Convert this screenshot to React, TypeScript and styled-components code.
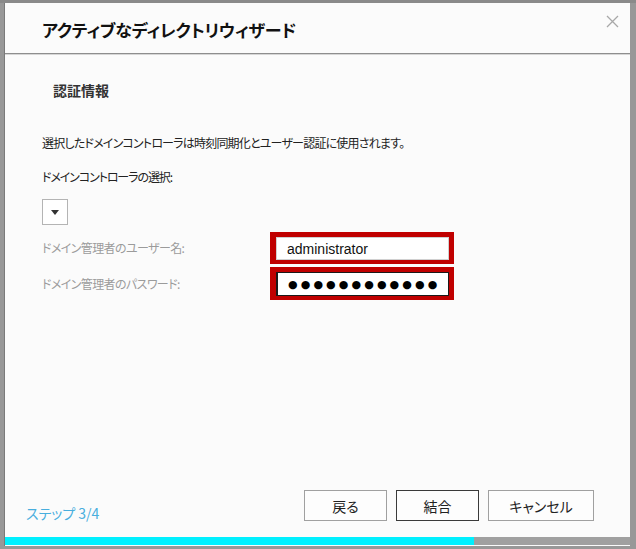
import React from "react";
import styled, { createGlobalStyle } from "styled-components";

const Global = createGlobalStyle`
  html, body { margin: 0; padding: 0; }
  body {
    background: #979797;
    font-family: "Noto Sans CJK JP", "Noto Sans", sans-serif;
    font-feature-settings: "palt";
  }
`;

const Backdrop = styled.div`
  width: 636px;
  height: 549px;
  box-sizing: border-box;
  padding: 3px 6px 3px 5px;
  background:
    linear-gradient(#8a8a8a, #8a8a8a) 0 0 / 100% 3px no-repeat,
    #989898;
`;

const Dialog = styled.div`
  width: 625px;
  height: 543px;
  background: #fbfbfb;
  display: flex;
  flex-direction: column;
  box-shadow: -1px 0 0 #7a7a7a;
`;

const Header = styled.div`
  height: 50px;
  flex: none;
  display: flex;
  justify-content: space-between;
  align-items: flex-start;
  padding: 0 10px 0 37px;
  border-bottom: 1px solid #8e8e8e;
  box-shadow: 0 1px 0 #d6d6d6;
`;

const Title = styled.h1`
  margin: 17px 0 0;
  font-size: 17px;
  font-weight: bold;
  color: #111;
  letter-spacing: -0.2px;
  line-height: 20px;
`;

const Close = styled.button`
  margin-top: 10px;
  border: none;
  background: none;
  padding: 0;
  width: 16px;
  height: 16px;
  display: flex;
  align-items: center;
  justify-content: center;
  cursor: pointer;
`;

const Body = styled.div`
  flex: 1;
  padding: 0 0 0 37px;
  display: flex;
  flex-direction: column;
`;

const Section = styled.h2`
  margin: 26px 0 0 11px;
  font-size: 14px;
  font-weight: bold;
  color: #333;
  line-height: 20px;
`;

const Text = styled.p<{ $top: number; $ls: number }>`
  margin: ${(p) => p.$top}px 0 0;
  font-size: 12px;
  color: #222;
  line-height: 18px;
  letter-spacing: ${(p) => p.$ls}px;
`;

const Select = styled.div`
  margin-top: 13px;
  width: 24px;
  height: 24px;
  border: 1px solid #b4b4b4;
  background: #fff;
  display: flex;
  align-items: center;
  justify-content: center;
`;

const Arrow = styled.span`
  width: 0;
  height: 0;
  border-left: 4px solid transparent;
  border-right: 4px solid transparent;
  border-top: 5px solid #333;
`;

const FieldRow = styled.div<{ $top: number }>`
  margin-top: ${(p) => p.$top}px;
  display: grid;
  grid-template-columns: 228px 184px;
  align-items: center;
`;

const Label = styled.span`
  font-size: 12px;
  color: #9b9b9b;
  line-height: 18px;
  letter-spacing: -0.6px;
`;

const Highlight = styled.div<{ $h: number }>`
  height: ${(p) => p.$h}px;
  box-sizing: border-box;
  background: #c00000;
  padding: 5px 5px 4px 6px;
  display: flex;
`;

const Field = styled.div<{ $focused?: boolean }>`
  flex: 1;
  background: #fff;
  box-sizing: border-box;
  border: 1px solid ${(p) => (p.$focused ? "#1a1a1a" : "#d0d0d0")};
  border-left-width: ${(p) => (p.$focused ? 2 : 1)}px;
  display: flex;
  align-items: center;
  padding-left: 10px;
  font-family: "Liberation Sans", Arial, sans-serif;
  font-size: 14px;
  color: #111;
`;

const Dots = styled.span`
  font-family: "DejaVu Sans", sans-serif;
  font-size: 11px;
  letter-spacing: 3.1px;
  color: #000;
`;

const Footer = styled.div`
  flex: none;
  display: flex;
  align-items: flex-end;
  justify-content: space-between;
  padding: 0 36px 16px 21px;
`;

const Step = styled.span`
  font-size: 14px;
  color: #48aede;
  line-height: 20px;
  margin-bottom: -2px;
`;

const Buttons = styled.div`
  display: flex;
  gap: 9px;
`;

const Button = styled.button<{ $w: number; $primary?: boolean }>`
  width: ${(p) => p.$w}px;
  height: 31px;
  background: #fdfdfd;
  border: 1px solid ${(p) => (p.$primary ? "#3a3a3a" : "#a0a0a0")};
  font-family: "Noto Sans CJK JP", sans-serif;
  font-feature-settings: "palt";
  font-size: 14px;
  color: #222;
  padding: 0;
`;

const Progress = styled.div`
  flex: none;
  height: 8px;
  margin-bottom: 1px;
  background: #a0a0a0;
  display: flex;
`;

const Fill = styled.div`
  background: #00f0ff;
`;

export default function App() {
  const progress = 469 / 625;
  return (
    <>
      <Global />
      <Backdrop>
        <Dialog>
          <Header>
            <Title>アクティブなディレクトリウィザード</Title>
            <Close aria-label="close">
              <svg width="13" height="13" viewBox="0 0 13 13">
                <path d="M1 1 L12 12 M12 1 L1 12" stroke="#a8a8a8" strokeWidth="1.3" fill="none" />
              </svg>
            </Close>
          </Header>
          <Body>
            <Section>認証情報</Section>
            <Text $top={34} $ls={-0.8}>選択したドメインコントローラは時刻同期化とユーザー認証に使用されます。</Text>
            <Text $top={16} $ls={-1.1}>ドメインコントローラの選択:</Text>
            <Select>
              <Arrow />
            </Select>
            <FieldRow $top={7}>
              <Label>ドメイン管理者のユーザー名:</Label>
              <Highlight $h={32}>
                <Field>administrator</Field>
              </Highlight>
            </FieldRow>
            <FieldRow $top={3}>
              <Label>ドメイン管理者のパスワード:</Label>
              <Highlight $h={33}>
                <Field $focused>
                  <Dots>●●●●●●●●●●●●</Dots>
                </Field>
              </Highlight>
            </FieldRow>
          </Body>
          <Footer>
            <Step>ステップ 3/4</Step>
            <Buttons>
              <Button $w={83}>戻る</Button>
              <Button $w={83} $primary>結合</Button>
              <Button $w={106}>キャンセル</Button>
            </Buttons>
          </Footer>
          <Progress>
            <Fill style={{ width: `${progress * 100}%` }} />
          </Progress>
        </Dialog>
      </Backdrop>
    </>
  );
}
